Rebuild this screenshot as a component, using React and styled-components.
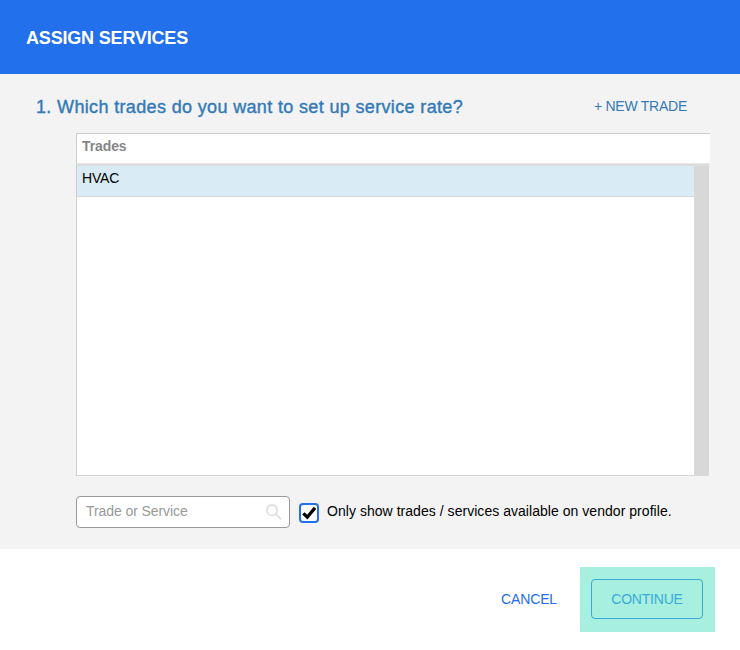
import React from "react";
import styled, { createGlobalStyle } from "styled-components";

const GlobalStyle = createGlobalStyle`
  *, *::before, *::after { box-sizing: border-box; }
  body {
    margin: 0;
    background: #fff;
    font-family: "Liberation Sans", Arial, sans-serif;
    font-size: 14px;
    line-height: 20px;
    color: #000;
  }
`;

const Dialog = styled.main`
  width: 740px;
  height: 650px;
  display: flex;
  flex-direction: column;
  background: #fff;
  overflow: hidden;
  white-space: nowrap;
`;

const Header = styled.header`
  flex: 0 0 74px;
  display: flex;
  align-items: center;
  padding: 1px 26px 0;
  background: #2270eb;
`;

const Title = styled.h1`
  margin: 0;
  font-size: 18px;
  line-height: 24px;
  font-weight: 700;
  letter-spacing: -0.18px;
  color: #fff;
`;

const Body = styled.section`
  flex: 0 0 475px;
  padding: 21px 30px 0 36px;
  background: #f3f3f3;
`;

const QuestionRow = styled.div`
  display: flex;
  justify-content: space-between;
  height: 38px;
  padding-right: 23px;
`;

const Question = styled.h2`
  margin: 0;
  font-size: 18px;
  line-height: 24px;
  font-weight: 400;
  letter-spacing: 0.35px;
  color: #337ab7;
  -webkit-text-stroke: 0.4px #337ab7;
`;

const LinkButton = styled.button`
  border: 0;
  padding: 0;
  background: none;
  font: inherit;
  line-height: 22px;
  height: 22px;
  letter-spacing: ${(p) => p.$spacing || "0"};
  color: ${(p) => p.$color};
`;

const Table = styled.div`
  margin-left: 40px;
  width: 634px;
`;

const TableHead = styled.div`
  height: 31px;
  padding: 2px 5px 0;
  border: solid #ccc;
  border-width: 1px 0 1px 1px;
  border-bottom-color: #e9e9e9;
  background: #fff;
  font-weight: 700;
  letter-spacing: -0.1px;
  color: #868686;
`;

const TableBody = styled.div`
  display: flex;
  width: 633px;
  height: 312px;
  border: solid #ccc;
  border-width: 2px 0 1px 1px;
  border-top-color: #dbdddd;
  border-bottom-color: #d8d8d8;
  background: #fff;
`;

const Rows = styled.div`
  flex: 1;
`;

const Row = styled.div`
  height: 31px;
  padding: 2px 5px 0;
  border-bottom: 1px solid #d8d8d8;
  background: #d9ecf5;
  letter-spacing: -0.15px;
`;

const ScrollTrack = styled.div`
  width: 15px;
  background: #d8d8d8;
`;

const FilterRow = styled.div`
  display: flex;
  margin: 20px 0 0 40px;
`;

const SearchField = styled.label`
  display: flex;
  align-items: center;
  width: 214px;
  height: 32px;
  padding: 0 7px 0 9px;
  border: 1px solid #999;
  border-radius: 4px;
  background: #fff;
`;

const SearchInput = styled.input`
  flex: 1;
  min-width: 0;
  height: 20px;
  margin-bottom: 2px;
  padding: 0;
  border: 0;
  outline: 0;
  background: none;
  font: inherit;
  letter-spacing: -0.08px;
  &::placeholder { color: #999; opacity: 1; }
`;

const SearchIcon = styled.svg`
  flex: none;
  width: 17px;
  height: 17px;
  margin-top: 1px;
`;

const CheckBox = styled.span`
  display: flex;
  width: 20px;
  height: 20px;
  margin: 7px 8px 0 9px;
  border: 2px solid #2270eb;
  border-radius: 4px;
  background: #fff;
`;

const CheckLabel = styled.span`
  padding-top: 5px;
  letter-spacing: 0.04px;
`;

const Footer = styled.footer`
  flex: 1;
  display: flex;
  justify-content: flex-end;
  align-items: flex-start;
  gap: 23px;
  padding: 18px 25px 0;
  ${LinkButton} { margin-top: 21px; }
`;

const Highlight = styled.div`
  width: 135px;
  height: 65px;
  padding: 12px 12px 0 11px;
  background: #a7f0df;
`;

const ContinueButton = styled.button`
  display: block;
  width: 112px;
  height: 40px;
  padding: 0;
  border: 1px solid #3aa9d9;
  border-radius: 4px;
  background: none;
  font: inherit;
  letter-spacing: -0.2px;
  color: #3aa9d9;
`;

export default function App() {
  return (
    <Dialog>
      <GlobalStyle />
      <Header>
        <Title>ASSIGN SERVICES</Title>
      </Header>
      <Body>
        <QuestionRow>
          <Question>1. Which trades do you want to set up service rate?</Question>
          <LinkButton $color="#337ab7" $spacing="-0.25px">+ NEW TRADE</LinkButton>
        </QuestionRow>
        <Table>
          <TableHead>Trades</TableHead>
          <TableBody>
            <Rows>
              <Row>HVAC</Row>
            </Rows>
            <ScrollTrack />
          </TableBody>
        </Table>
        <FilterRow>
          <SearchField>
            <SearchInput placeholder="Trade or Service" />
            <SearchIcon viewBox="0 0 17 17" fill="none" stroke="#e3e3e3" strokeWidth="2">
              <circle cx="7" cy="6.2" r="5.2" />
              <path d="M10.8 10.2 16.2 15.5" strokeWidth="2.2" />
            </SearchIcon>
          </SearchField>
          <CheckBox>
            <svg width="16" height="16" viewBox="0 0 16 16">
              <path d="M1.2 9.5 3.6 7.3 6.2 9.7 12.8 1.7 15.2 3.9 6.4 14.6Z" fill="#000" />
            </svg>
          </CheckBox>
          <CheckLabel>Only show trades / services available on vendor profile.</CheckLabel>
        </FilterRow>
      </Body>
      <Footer>
        <LinkButton $color="#2270eb" $spacing="-0.15px">CANCEL</LinkButton>
        <Highlight>
          <ContinueButton>CONTINUE</ContinueButton>
        </Highlight>
      </Footer>
    </Dialog>
  );
}
